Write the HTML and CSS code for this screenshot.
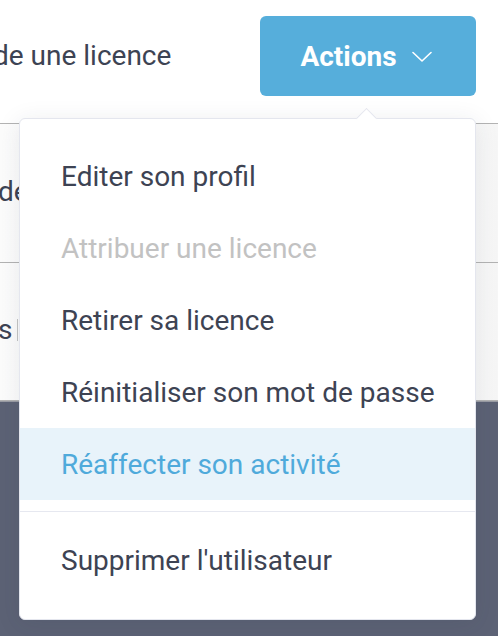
FILE: index.html
```html
<!DOCTYPE html>
<html lang="fr">
<head>
<meta charset="utf-8">
<link rel="stylesheet" href="styles.css">
</head>
<body>
<div class="page">
  <div class="row row-top">
    <span class="row-text">de une licence</span>
    <button class="btn-actions">Actions
      <svg class="chev" width="20" height="12" viewBox="0 0 20 12"><path d="M1 1.5 L10 10 L19 1.5" fill="none" stroke="#fff" stroke-width="1.6" stroke-linecap="round" stroke-linejoin="round"/></svg>
    </button>
  </div>
  <div class="row row-mid">
    <span class="row-text clip">de</span>
  </div>
  <div class="row row-last">
    <span class="row-text">s</span><span class="vbar"></span>
  </div>
  <div class="footer"></div>

  <div class="menu">
    <span class="caret"></span>
    <ul class="menu-list">
      <li class="item">Editer son profil</li>
      <li class="item disabled">Attribuer une licence</li>
      <li class="item">Retirer sa licence</li>
      <li class="item">Réinitialiser son mot de passe</li>
      <li class="item active">Réaffecter son activité</li>
      <li class="divider"></li>
      <li class="item">Supprimer l'utilisateur</li>
    </ul>
  </div>
</div>
</body>
</html>
```
FILE: styles.css
```css
* { box-sizing: border-box; }
html, body { margin: 0; padding: 0; }
body {
  width: 498px;
  height: 636px;
  overflow: hidden;
  background: #ffffff;
  font-family: Roboto, "Liberation Sans", sans-serif;
  color: #3d4353;
}
.page {
  position: relative;
  width: 498px;
  height: 636px;
  display: flex;
  flex-direction: column;
}
.row {
  display: flex;
  border-bottom: 1px solid #b3b3b3;
  background: linear-gradient(90deg, #fcfcfc, #ffffff 30%, #ffffff 80%, #f6f6f6);
}
.row-text {
  font-size: 28px;
  white-space: nowrap;
}
.row-top {
  height: 124px;
  padding: 16px 22px 0 0;
  justify-content: space-between;
  align-items: flex-start;
  background: #ffffff;
}
.row-top .row-text { line-height: 80px; margin-left: -7px; }
.row-mid {
  height: 139px;
  align-items: center;
  padding-bottom: 3px;
}
.row-mid .row-text { margin-left: -2px; }
.clip {
  display: block;
  width: 21px;
  overflow: hidden;
}
.row-last {
  height: 138px;
  align-items: center;
  padding-bottom: 4px;
}
.row-last .row-text { margin-left: -2px; }
.vbar {
  width: 1px;
  height: 22px;
  background: #c4c4c4;
  margin-left: 5px;
}
.footer {
  flex: 1;
  background: #5c6275;
  border-top: 1px solid #9a9ca4;
}
.btn-actions {
  width: 216px;
  height: 80px;
  border: none;
  border-radius: 6px;
  background: #56aedb;
  color: #ffffff;
  font-family: Roboto, "Liberation Sans", sans-serif;
  font-size: 28px;
  font-weight: 700;
  display: flex;
  align-items: center;
  justify-content: center;
  gap: 15px;
  padding: 0 4px 0 0;
}
.chev { display: block; margin-top: 1px; }

.menu {
  position: absolute;
  left: 19px;
  top: 118px;
  width: 457px;
  height: 502px;
  background: #ffffff;
  border: 1px solid #e4e6ee;
  border-radius: 6px;
  box-shadow: 0 4px 24px rgba(40, 45, 70, 0.10);
}
.caret {
  position: absolute;
  left: 339px;
  top: -8px;
  width: 15px;
  height: 15px;
  background: #ffffff;
  border-top: 1px solid #e4e6ee;
  border-left: 1px solid #e4e6ee;
  transform: rotate(45deg);
}
.menu-list {
  list-style: none;
  margin: 0;
  padding: 21px 0;
  position: relative;
}
.item {
  height: 72px;
  display: flex;
  align-items: center;
  padding-left: 41px;
  font-size: 28px;
  color: #3d4353;
  white-space: nowrap;
}
.item.disabled { color: #c2c2c2; }
.item.active { background: #e8f3fa; color: #4faadb; }
.divider {
  height: 1px;
  background: #e6e8f0;
  margin: 11px 0 12px;
}
```
